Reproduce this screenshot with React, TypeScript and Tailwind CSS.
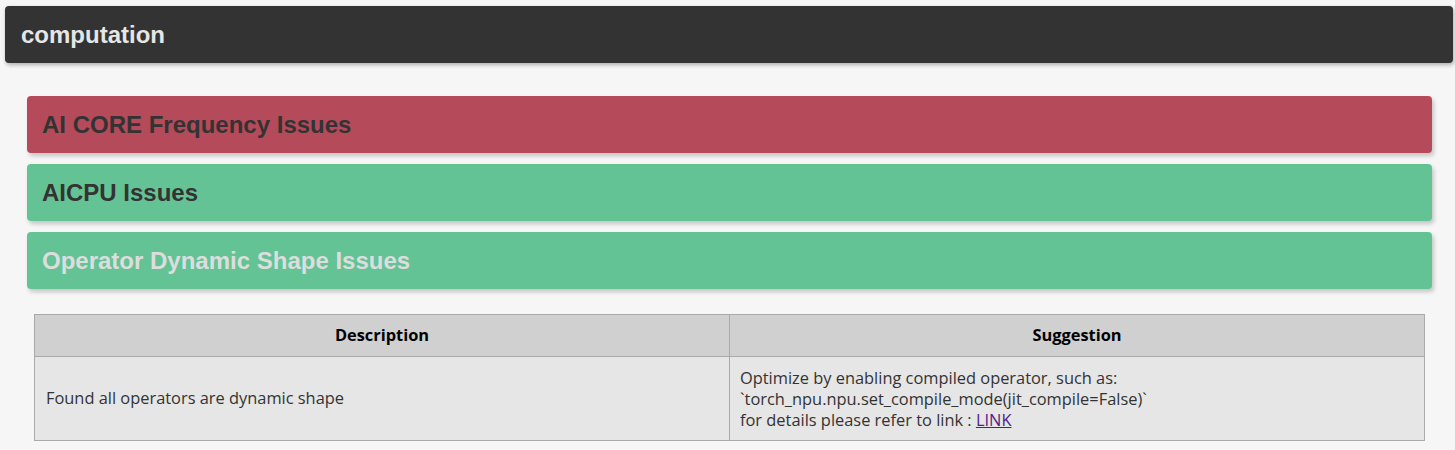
import React from 'react';

const issues = [
  { title: 'AI CORE Frequency Issues', bg: 'bg-[#b54a5b]', text: 'text-[#333333]' },
  { title: 'AICPU Issues', bg: 'bg-[#64c395]', text: 'text-[#333333]' },
  { title: 'Operator Dynamic Shape Issues', bg: 'bg-[#64c395]', text: 'text-[#dddddd]' },
];

export default function App() {
  return (
    <div className="min-h-screen bg-[#f6f6f6] pt-[6px] pb-4 font-['Liberation_Sans',Arial,sans-serif]">
      <div className="ml-[5px] mr-[2px] h-[57px] bg-[#333333] rounded-[4px] shadow-[1px_2px_4px_rgba(0,0,0,0.3)] flex items-center pl-4">
        <h1 className="text-[24px] font-bold text-[#e6e6e6] leading-none">computation</h1>
      </div>

      <div className="mt-[33px] ml-[27px] mr-[23px] flex flex-col gap-[11px]">
        {issues.map((issue) => (
          <div
            key={issue.title}
            className={`h-[57px] rounded-[4px] flex items-center pl-[15px] shadow-[2px_3px_4px_rgba(0,0,0,0.2)] ${issue.bg}`}
          >
            <h2 className={`text-[24px] font-bold leading-none ${issue.text}`}>{issue.title}</h2>
          </div>
        ))}
      </div>

      <table className="mt-[25px] ml-[34px] w-[1391px] border-collapse table-fixed font-['Open_Sans','Noto_Sans',sans-serif] text-[16.4px] text-[#333333]">
        <thead>
          <tr className="bg-[#d0d0d0] h-[42px]">
            <th className="border border-[#aaaaaa] text-black font-bold">Description</th>
            <th className="border border-[#aaaaaa] text-black font-bold">Suggestion</th>
          </tr>
        </thead>
        <tbody>
          <tr className="bg-[#e6e6e6] h-[84px]">
            <td className="border border-[#aaaaaa] px-[11px] align-middle">Found all operators are dynamic shape</td>
            <td className="border border-[#aaaaaa] px-[10px] align-middle leading-[21px]">
              Optimize by enabling compiled operator, such as:
              <br />
              `torch_npu.npu.set_compile_mode(jit_compile=False)`
              <br />
              for details please refer to link : <a href="#" className="text-[#551a8b] underline">LINK</a>
            </td>
          </tr>
        </tbody>
      </table>
    </div>
  );
}
